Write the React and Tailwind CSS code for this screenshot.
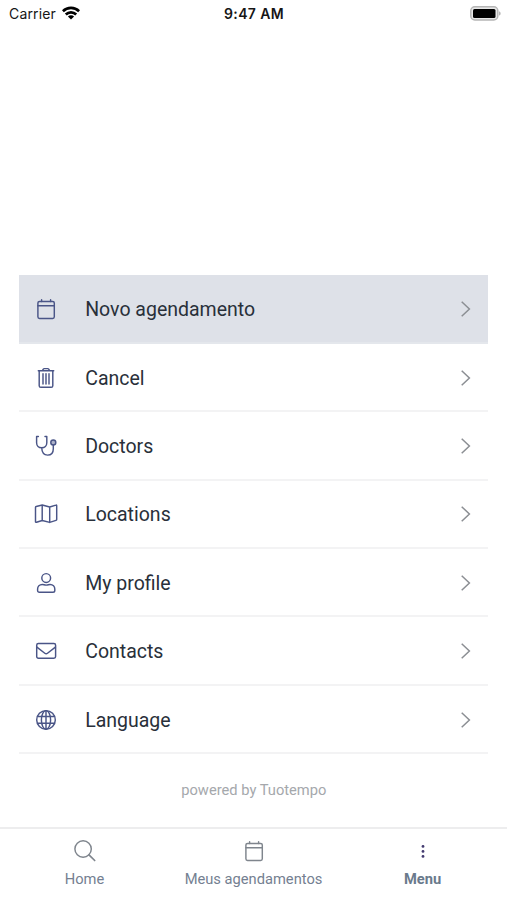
import React from 'react';

function Icon({ children, className = 'text-[#4a5587]' }) {
  return (
    <svg
      viewBox="0 0 24 24"
      className={`h-6 w-6 shrink-0 ${className}`}
      fill="none"
      stroke="currentColor"
      strokeWidth="1.45"
      strokeLinecap="round"
      strokeLinejoin="round"
    >
      {children}
    </svg>
  );
}

const calendar = (
  <>
    <rect x="3.9" y="4.4" width="16.4" height="17" rx="1.6" />
    <path d="M3.9 8.7h16.4M7.6 2.7v1.7M16.6 2.7v1.7" />
  </>
);

const trash = (
  <>
    <path d="M4.3 4.7h15.4M5.2 4.7v15c0 1 .6 1.6 1.6 1.6h10.4c1 0 1.6-.6 1.6-1.6v-15M8.4 4.7l.9-1.5c.3-.5.5-.6 1-.6h3.4c.5 0 .7.1 1 .6l.9 1.5" />
    <path d="M9 7.8v10.3M12 7.8v10.3M15 7.8v10.3" />
  </>
);

const stethoscope = (
  <>
    <path d="M4.4 2.5H2.6v6.2c0 3 2.1 5.1 5.1 5.1s5.1-2.1 5.1-5.1V2.5H11M7.7 13.8c.2 4.3 2.4 7.3 5.9 7.3s5.7-2.6 5.7-6.4V11" />
    <circle cx="19.3" cy="8.5" r="2.5" fill="currentColor" fillOpacity=".45" />
  </>
);

const map = (
  <path d="M1.5 5.3c0-.4.3-.7.7-.8L8.2 3l7.5 2 6.2-1.9c.5-.2.8.1.8.6v13.9c0 .4-.3.7-.7.8l-6.3 2-7.5-1.9-5.7 1.8c-.6.2-1-.1-1-.6zM8.2 3v15.5M15.7 5v15.4" />
);

const person = (
  <>
    <circle cx="12.2" cy="7" r="4.4" />
    <path d="M8.3 13.4c1.5 0 2 .7 3.9.7s2.4-.7 3.9-.7c2.8 0 4.7 2 4.7 4.6v1.5c0 1-.7 1.8-1.8 1.8H5.4c-1.1 0-1.8-.8-1.8-1.8V18c0-2.6 1.9-4.6 4.7-4.6z" />
  </>
);

const envelope = (
  <>
    <rect x="2.7" y="4.5" width="18.9" height="14.8" rx="1.7" />
    <path d="M2.9 8.1l7.9 6.2c.9.7 1.8.7 2.7 0l7.9-6.2" />
  </>
);

const globe = (
  <>
    <circle cx="12" cy="11.9" r="9.3" />
    <ellipse cx="12" cy="11.9" rx="4.6" ry="9.3" />
    <path d="M12 2.6v18.6M3.6 8.5h16.8M3.6 15.3h16.8" />
  </>
);

const items = [
  { label: 'Novo agendamento', icon: calendar, active: true },
  { label: 'Cancel', icon: trash },
  { label: 'Doctors', icon: stethoscope },
  { label: 'Locations', icon: map },
  { label: 'My profile', icon: person },
  { label: 'Contacts', icon: envelope },
  { label: 'Language', icon: globe },
];

function StatusBar() {
  return (
    <header className="grid h-7 grid-cols-3 items-center pl-[9px] pr-[6px] font-['Inter','Liberation_Sans',sans-serif] text-[14px] text-[#161616]">
      <div className="-mt-px flex items-center gap-[6px]">
        <span className="tracking-[0.15px]">Carrier</span>
        <svg viewBox="0 0 18 14" className="-mt-0.5 h-[14px] w-[18px]" fill="none" stroke="#000" strokeWidth="2.7">
          <path d="M.9 5.2a11.6 11.6 0 0 1 16.2 0M3.8 8.5a7.4 7.4 0 0 1 10.4 0" />
          <path d="M5.9 10.5a4.4 4.4 0 0 1 6.2 0L9 13.6z" fill="#000" stroke="none" />
        </svg>
      </div>
      <span className="-ml-[2px] -mt-px text-center font-semibold tracking-[0.35px]">9:47 AM</span>
      <svg viewBox="0 0 31 15" className="h-[15px] w-[31px] -mt-0.5 justify-self-end">
        <rect x=".8" y=".8" width="27" height="13.2" rx="4" fill="#e8e8e8" stroke="#b5b5b5" strokeWidth="1.5" />
        <rect x="3" y="3" width="22.5" height="9" rx="1.5" fill="#000" />
        <path d="M29 5.2c2.2.8 2.2 3.6 0 4.4z" fill="#b5b5b5" />
      </svg>
    </header>
  );
}

function MenuRow({ label, icon, active }) {
  return (
    <li
      className={`flex h-[68.42px] items-center border-b-2 pl-[15px] pr-[17px] pt-px ${
        active ? 'border-[#e4e7ec] bg-[#dee1e8]' : 'border-[#f3f3f4]'
      }`}
    >
      <Icon>{icon}</Icon>
      <span className="ml-[27px] flex-1 pt-0.5 text-[19.5px] leading-6 text-[#29303a]">{label}</span>
      <svg viewBox="0 0 11 18" className="h-[18px] w-[11px]" fill="none" stroke="#8b8e93" strokeWidth="1.5">
        <path d="M1.7 1.7 9.4 9l-7.7 7.3" />
      </svg>
    </li>
  );
}

function Tab({ label, bold, children }) {
  return (
    <a className="flex flex-col items-center text-[#748091]">
      {children}
      <span className={`mt-[6px] text-[14.7px] leading-5 ${bold ? 'font-bold text-[#6a7a8c]' : ''}`}>{label}</span>
    </a>
  );
}

export default function App() {
  return (
    <div className="flex h-[900px] w-full flex-col overflow-hidden bg-white font-['Roboto','Liberation_Sans',sans-serif]">
      <StatusBar />
      <main className="flex-1 pl-[19.2px] pr-[18.6px] pt-[247.4px]">
        <ul>
          {items.map((item) => (
            <MenuRow key={item.label} {...item} />
          ))}
        </ul>
        <p className="mt-[26px] text-center text-[14.7px] leading-5 text-[#a5a8ac]">powered by Tuotempo</p>
      </main>
      <nav className="grid h-[73px] grid-cols-3 border-t-2 border-[#ededee] pt-[10px]">
        <Tab label="Home">
          <Icon className="text-[#7f858d]">
            <circle cx="10.1" cy="10" r="8.2" />
            <path d="M16 15.9l5.7 5.6" strokeWidth="1.7" />
          </Icon>
        </Tab>
        <Tab label="Meus agendamentos">
          <Icon className="text-[#7f858d]">{calendar}</Icon>
        </Tab>
        <Tab label="Menu" bold>
          <Icon className="text-[#443b70]">
            <g fill="currentColor" stroke="none">
              <circle cx="12" cy="7.4" r="1.4" />
              <circle cx="12" cy="12.4" r="1.4" />
              <circle cx="12" cy="17.4" r="1.4" />
            </g>
          </Icon>
        </Tab>
      </nav>
    </div>
  );
}
